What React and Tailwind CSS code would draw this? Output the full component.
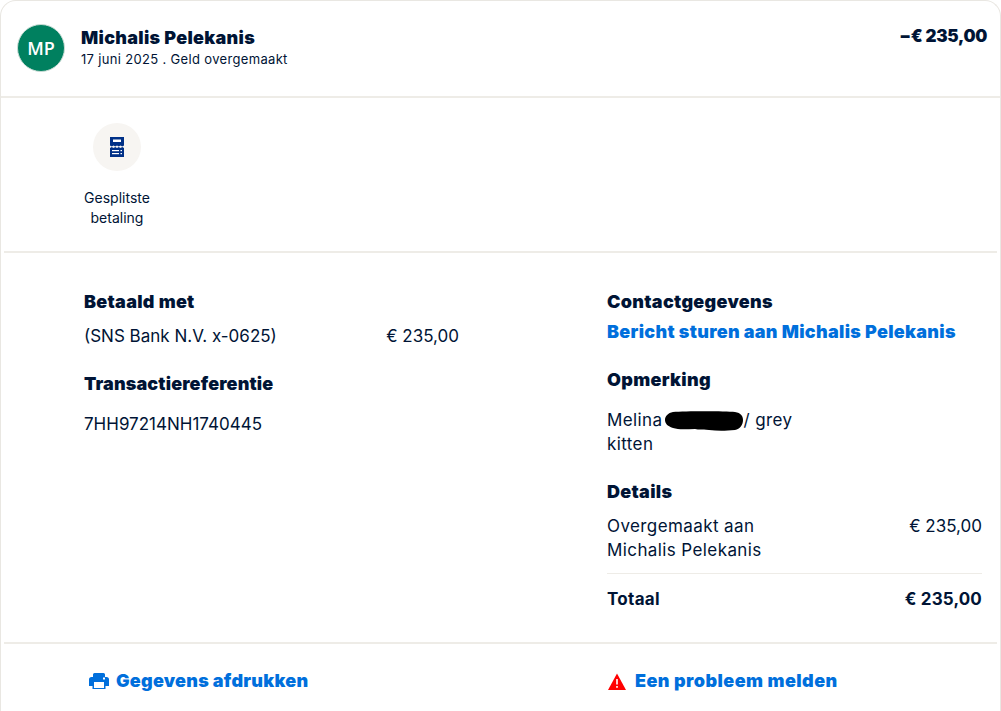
const NAVY = "text-[#001435]";
const HEADING = "text-[18px] font-black leading-6 tracking-[0.3px]";
const BODY = "text-[17px] leading-6";

function SplitIcon() {
  return (
    <svg width="14" height="20" viewBox="0 0 14 20">
      <path d="M0 0h14v8.5l-1.75 1-1.75-1-1.75 1-1.75-1-1.75 1-1.75-1-1.75 1L0 8.5z" fill="#003087" />
      <path d="M0 11l1.75-1 1.75 1 1.75-1 1.75 1 1.75-1 1.75 1 1.75-1L14 11v9H0z" fill="#003087" />
      <rect x="3" y="2.5" width="8" height="2.5" fill="#fff" />
      <rect x="2" y="13" width="7" height="1.2" fill="#fff" />
      <rect x="10.5" y="13" width="1.5" height="1.2" fill="#fff" />
      <rect x="2" y="16" width="7" height="1.2" fill="#fff" />
      <rect x="10.5" y="16" width="1.5" height="1.2" fill="#fff" />
    </svg>
  );
}

function PrintIcon() {
  return (
    <svg width="20" height="16" viewBox="0 0 20 16">
      <path d="M5.500 0h9A1.500 1.500 0 0 1 16 1.500V5H4V1.500A1.500 1.500 0 0 1 5.500 0z" fill="#006fdc" />
      <path d="M2.500 4h15A2.500 2.500 0 0 1 20 6.500V13h-3.500v3h-13v-3H0V6.500A2.500 2.500 0 0 1 2.500 4z" fill="#006fdc" />
      <rect x="5" y="9" width="10" height="6" fill="#fff" />
      <rect x="14" y="4.500" width="2" height="2" fill="#fff" />
    </svg>
  );
}

function WarnIcon() {
  return (
    <svg width="18" height="17" viewBox="0 0 18 17">
      <path d="M9 0.500L18 17H0z" fill="#ff0000" />
      <rect x="8.200" y="6" width="1.600" height="5.500" fill="#fff" />
      <rect x="8.200" y="13" width="1.600" height="1.800" fill="#fff" />
    </svg>
  );
}

function Scribble() {
  return (
    <svg className="inline-block align-[-5px] ml-[2px] mr-px" width="78" height="20" viewBox="0 0 78 20">
      <path
        d="M8 1C20 0 60 0 70 1c6 1 8 4 8 8 0 5-3 9-8 10-10 1-18 1-26 0-8-1-10 0-14-1-8 0-16 1-22-1C2 15 0 12 0 9 0 5 3 2 8 1z"
        fill="#000"
      />
    </svg>
  );
}

export default function App() {
  return (
    <div className={`h-[711px] w-full overflow-hidden bg-white font-['Inter',sans-serif] ${NAVY}`}>
      <div className="h-full rounded-t-2xl border-x border-t border-[#e9e7e2]">
        {/* HEADER */}
        <div className="flex h-[97px] items-start justify-between border-b-2 border-[#eeece7] pl-4 pr-[13px] pt-[23px]">
          <div className="flex items-start gap-4">
            <div className="flex h-12 w-12 items-center justify-center rounded-full border border-[#c9dcd5] bg-[#00805f] font-['Open_Sans',sans-serif] text-[18px] font-semibold text-white">
              MP
            </div>
            <div>
              <h1 className="pt-[2px] text-[18px] font-black leading-6 tracking-[0.3px]">Michalis Pelekanis</h1>
              <p className="text-[13px] leading-[19px] tracking-[0.33px]">17 juni 2025 . Geld overgemaakt</p>
            </div>
          </div>
          <div className="text-[17px] font-black leading-6 tracking-[-0.3px]">−€ 235,00</div>
        </div>

        {/* ACTIONS */}
        <div className="mx-[3px] h-[155px] border-b-2 border-[#eeece7] pl-[73px] pt-[25px]">
          <div className="flex w-[80px] flex-col items-center">
            <div className="flex h-12 w-12 items-center justify-center rounded-full bg-[#f7f5f2]">
              <SplitIcon />
            </div>
            <div className="mt-[17px] text-center text-[14px] leading-5">
              Gesplitste
              <br />
              betaling
            </div>
          </div>
        </div>

        {/* DETAILS */}
        <div className="mx-[3px] flex h-[391px] border-b-2 border-[#eeece7] pt-[37px]">
          <div className="ml-[80px] w-[375px]">
            <h2 className={HEADING}>Betaald met</h2>
            <div className={`mt-[10px] flex justify-between ${BODY}`}>
              <span>(SNS Bank N.V. x-0625)</span>
              <span>€ 235,00</span>
            </div>
            <h2 className="mt-[24px] text-[18px] font-black leading-6 tracking-[0.15px]">Transactiereferentie</h2>
            <div className={`mt-[16px] ${BODY}`}>7HH97214NH1740445</div>
          </div>

          <div className="ml-[148px] w-[375px]">
            <h2 className={HEADING}>Contactgegevens</h2>
            <a className={`mt-[6px] block text-[#006fdc] ${HEADING}`}>
              Bericht sturen aan Michalis Pelekanis
            </a>
            <h2 className={`mt-[24px] ${HEADING}`}>Opmerking</h2>
            <p className={`mt-[16px] tracking-[0.4px] ${BODY}`}>
              Melina
              <Scribble />/ grey
              <br />
              kitten
            </p>
            <h2 className={`mt-[24px] ${HEADING}`}>Details</h2>
            <div className={`mt-[10px] flex justify-between border-b border-[#eeece7] pb-[11px] ${BODY}`}>
              <span className="tracking-[0.4px]">
                Overgemaakt aan
                <br />
                Michalis Pelekanis
              </span>
              <span>€ 235,00</span>
            </div>
            <div className="mt-[13px] flex justify-between text-[17px] font-bold leading-6 tracking-[0.15px]">
              <span className="tracking-[0.3px]">Totaal</span>
              <span>€ 235,00</span>
            </div>
          </div>
        </div>

        {/* FOOTER */}
        <div className="mx-[3px] flex pt-[25px] text-[18px] font-black leading-6 text-[#006fdc]">
          <a className="ml-[85px] flex w-[519px] items-center gap-[7px] tracking-[0.25px]">
            <PrintIcon />
            Gegevens afdrukken
          </a>
          <a className="flex items-center gap-[9px] tracking-[0.45px]">
            <WarnIcon />
            Een probleem melden
          </a>
        </div>
      </div>
    </div>
  );
}
